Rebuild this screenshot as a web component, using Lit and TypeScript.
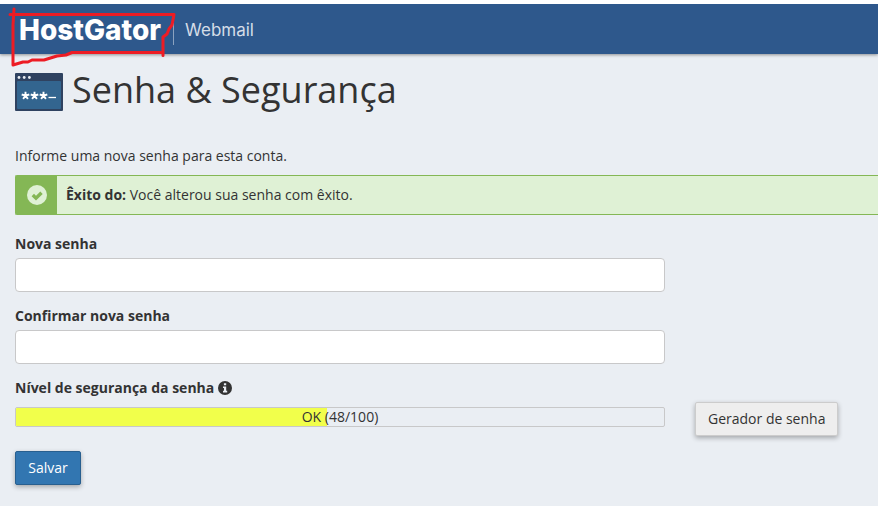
import { LitElement, html, css } from "lit";
import { customElement, property } from "lit/decorators.js";

@customElement("strength-meter")
class StrengthMeter extends LitElement {
  @property({ type: Number }) value = 0;
  @property() label = "";

  static styles = css`
    :host { display: block; }
    .track {
      display: grid;
      box-sizing: border-box;
      height: 20px;
      border: 1px solid #c8c8c9;
      border-radius: 2px;
      overflow: hidden;
    }
    .fill { grid-area: 1 / 1; background: #f1ff4b; }
    .text { grid-area: 1 / 1; text-align: center; line-height: 18px; }
  `;

  render() {
    return html`
      <div class="track" role="meter" aria-valuemin="0" aria-valuemax="100" aria-valuenow=${this.value}>
        <div class="fill" style="width:${this.value}%"></div>
        <div class="text">${this.label} (${this.value}/100)</div>
      </div>
    `;
  }
}

@customElement("app-root")
class AppRoot extends LitElement {
  static styles = css`
    :host {
      display: flex;
      flex-direction: column;
      box-sizing: border-box;
      min-height: 100vh;
      background: #eaeef3;
      border-bottom: 1px solid #fff;
      color: #333;
      font: 14px/20px "Open Sans", "Noto Sans", sans-serif;
    }
    .header {
      position: relative;
      display: flex;
      align-items: center;
      box-sizing: border-box;
      height: 54px;
      padding: 2px 19px 0;
      border-top: 4px solid #fff;
      background: #2e588c;
      box-shadow: 0 1px 3px rgba(0, 0, 0, 0.4);
      font-family: Inter, sans-serif;
    }
    .brand {
      color: #fff;
      font-size: 28px;
      line-height: 32px;
      font-weight: 800;
      text-decoration: none;
    }
    .product {
      margin-left: 12px;
      padding-left: 11px;
      border-left: 1px solid #8ba2bf;
      color: #d5dde7;
      font-size: 17px;
      line-height: 30px;
    }
    .mark {
      position: absolute;
      left: 0;
      top: 0;
      pointer-events: none;
    }
    .main { padding: 15px 0 20px 15px; }
    .title {
      display: flex;
      align-items: flex-end;
      gap: 9px;
      margin: 0;
      font-size: 36px;
      line-height: 42px;
      font-weight: 400;
    }
    .title svg { flex: none; }
    .intro { margin: 35px 0 9px; }
    .alert {
      display: flex;
      border: 1px solid #84b755;
      border-right: 0;
      border-radius: 2px 0 0 2px;
      background: #dff1d5;
    }
    .badge {
      display: flex;
      align-items: center;
      justify-content: center;
      width: 41px;
      background: #84b755;
    }
    .message { padding: 9px; }
    .message b { font-weight: 700; }
    .form { padding: 19px 15px 0 0; }
    .field { max-width: 650px; margin-bottom: 14px; }
    .label { display: block; font-weight: 700; }
    .input {
      display: block;
      box-sizing: border-box;
      width: 100%;
      height: 34px;
      margin-top: 4px;
      padding: 6px 12px;
      border: 1px solid #c8c8c9;
      border-radius: 4px;
      background: #fff;
      font: inherit;
    }
    .caption { display: flex; align-items: center; gap: 4px; margin-bottom: 4px; }
    .strength {
      display: grid;
      grid-template-columns: minmax(0, 650px) auto;
      justify-content: start;
      gap: 30px;
      margin-bottom: 15px;
    }
    .meter { margin-top: 5px; }
    .button {
      min-width: 66px;
      padding: 6px 12px;
      border: 1px solid #ccc;
      border-radius: 2px;
      background: #eee;
      box-shadow: 0 2px 5px rgba(0, 0, 0, 0.3);
      color: #333;
      font: inherit;
    }
    .primary { border-color: #285f8f; background: #3276b1; color: #fff; }
  `;

  render() {
    return html`
      <header class="header">
        <a class="brand" href="#">HostGator</a>
        <span class="product">Webmail</span>
        <svg class="mark" width="180" height="66" viewBox="0 4 180 66" fill="none" stroke="#ed1c24"
          stroke-width="3" stroke-linecap="round" stroke-linejoin="round" aria-hidden="true">
          <path d="M14 9L13 25V65L23 62L28 62L32 60L44 60L57 56L66 55L72 52.500H163V55.500V37L167 34L169 29L172 25L174 14.500H10" />
        </svg>
      </header>
      <main class="main">
        <h1 class="title">
          <svg width="48" height="38" viewBox="0 0 48 38" aria-hidden="true">
            <rect width="48" height="38" rx="1" fill="#2f4260" />
            <rect x="2" y="8" width="44" height="28" rx="1" fill="#33658f" />
            <g fill="#e8edf2">
              <circle cx="4" cy="4.500" r="1.400" /><circle cx="9.200" cy="4.500" r="1.400" /><circle cx="14.400" cy="4.500" r="1.400" />
            </g>
            <g fill="none" stroke="#fff" stroke-width="1.900">
              <path d="M10.500 22.700v-4M10.500 22.700l3.800-1.200M10.500 22.700l2.400 3.200M10.500 22.700l-2.400 3.200M10.500 22.700l-3.800-1.200" />
              <path d="M19.500 22.700v-4M19.500 22.700l3.800-1.200M19.500 22.700l2.400 3.200M19.500 22.700l-2.400 3.200M19.500 22.700l-3.800-1.200" />
              <path d="M28.500 22.700v-4M28.500 22.700l3.800-1.200M28.500 22.700l2.400 3.200M28.500 22.700l-2.400 3.200M28.500 22.700l-3.800-1.200" />
              <path d="M33.500 24.500h7.500" stroke-width="1.300" />
            </g>
          </svg>
          Senha &amp; Segurança
        </h1>
        <p class="intro">Informe uma nova senha para esta conta.</p>
        <div class="alert" role="status">
          <span class="badge">
            <svg width="20" height="20" viewBox="0 0 20 20" aria-hidden="true">
              <circle cx="10" cy="10" r="10" fill="#dff1d5" />
              <path d="M5.800 10l3.200 3.200 5.500-5.500" fill="none" stroke="#84b755" stroke-width="3.400" />
            </svg>
          </span>
          <div class="message"><b>Êxito do:</b> Você alterou sua senha com êxito.</div>
        </div>
        <form class="form">
          <div class="field">
            <label class="label" for="new">Nova senha</label>
            <input class="input" id="new" type="password" />
          </div>
          <div class="field">
            <label class="label" for="confirm">Confirmar nova senha</label>
            <input class="input" id="confirm" type="password" />
          </div>
          <div class="label caption">
            Nível de segurança da senha
            <svg width="14" height="14" viewBox="0 0 14 14" aria-hidden="true">
              <circle cx="7" cy="7" r="7" fill="#333" />
              <path d="M5.900 2.300h2.300v2H5.900zM5 5.500h3.200v4.300h1v1.600H5V9.800h1V7.100H5z" fill="#eaeef3" />
            </svg>
          </div>
          <div class="strength">
            <strength-meter class="meter" .value=${48} label="OK"></strength-meter>
            <button class="button" type="button">Gerador de senha</button>
          </div>
          <button class="button primary" type="button">Salvar</button>
        </form>
      </main>
    `;
  }
}
